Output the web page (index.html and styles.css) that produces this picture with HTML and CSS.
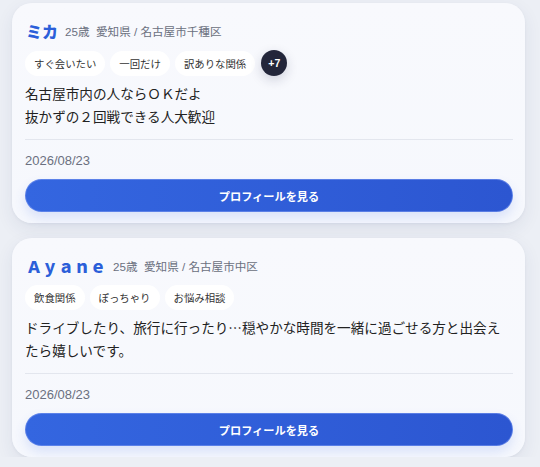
FILE: index.html
```html
<!DOCTYPE html>
<html lang="ja">
<head>
<meta charset="utf-8">
<link rel="stylesheet" href="styles.css">
</head>
<body>
<main class="list">
  <article class="card">
    <div class="head">
      <span class="name">ミカ</span>
      <span class="meta">25歳&nbsp;&nbsp;愛知県 / 名古屋市千種区</span>
    </div>
    <div class="tags">
      <span class="tag">すぐ会いたい</span>
      <span class="tag">一回だけ</span>
      <span class="tag">訳ありな関係</span>
      <span class="more">+7</span>
    </div>
    <p class="msg">名古屋市内の人ならＯＫだよ<br>抜かずの２回戦できる人大歓迎</p>
    <div class="date">2026/08/23</div>
    <button class="btn">プロフィールを見る</button>
  </article>
  <article class="card">
    <div class="head">
      <span class="name">Ａｙａｎｅ</span>
      <span class="meta">25歳&nbsp;&nbsp;愛知県 / 名古屋市中区</span>
    </div>
    <div class="tags">
      <span class="tag">飲食関係</span>
      <span class="tag">ぽっちゃり</span>
      <span class="tag">お悩み相談</span>
    </div>
    <p class="msg">ドライブしたり、旅行に行ったり…穏やかな時間を一緒に過ごせる方と出会えたら嬉しいです。</p>
    <div class="date">2026/08/23</div>
    <button class="btn">プロフィールを見る</button>
  </article>
</main>
</body>
</html>
```
FILE: styles.css
```css
* { box-sizing: border-box; }
html, body {
  margin: 0;
  padding: 0;
  background: #eceff5;
  font-family: "Liberation Sans", "Noto Sans CJK JP", sans-serif;
  color: #222;
}
.list {
  display: flex;
  flex-direction: column;
  gap: 15px;
  padding: 3px 15px 0 12px;
}
.card {
  background: linear-gradient(180deg, #f8f9fd 0%, #f6f8fd 100%);
  border-radius: 20px;
  padding: 16px 12px 11px 13px;
  box-shadow: 0 6px 18px rgba(40, 55, 100, 0.08), 0 1px 3px rgba(40, 55, 100, 0.05);
  display: flex;
  flex-direction: column;
}
.head {
  display: flex;
  align-items: center;
  gap: 7px;
  height: 24px;
  padding-left: 1px;
}
.name {
  font-family: "Noto Sans CJK JP", sans-serif;
  font-weight: 900;
  font-size: 16px;
  color: #2b5fd9;
}
.meta {
  font-size: 11.6px;
  color: #6b7080;
}
.tags {
  display: flex;
  align-items: center;
  gap: 5px;
  margin-top: 7px;
}
.tag {
  height: 25px;
  display: inline-flex;
  align-items: center;
  padding: 0 9px;
  border-radius: 13px;
  background: #ffffff;
  font-family: "Noto Sans CJK JP", sans-serif;
  font-size: 10.4px;
  color: #333;
}
.more {
  width: 26px;
  height: 26px;
  border-radius: 50%;
  background: #23263a;
  color: #fff;
  font-size: 10.5px;
  font-weight: 700;
  display: inline-flex;
  align-items: center;
  justify-content: center;
  margin-left: 1px;
  box-shadow: 0 4px 12px rgba(30, 35, 70, 0.18);
}
.msg {
  margin: 6px 0 0;
  font-family: "Noto Sans CJK JP", sans-serif;
  font-size: 13.6px;
  line-height: 23px;
  color: #222;
  padding-bottom: 11px;
  border-bottom: 1px solid #e3e6ee;
}
.date {
  margin-top: 11px;
  font-size: 13px;
  line-height: 20px;
  color: #6b7080;
}
.btn {
  margin-top: 8px;
  height: 33px;
  border: 1px solid rgba(120, 150, 240, 0.6);
  border-radius: 17px;
  background: linear-gradient(90deg, #3466e0 0%, #2c56d1 100%);
  color: #fff;
  font-family: "Noto Sans CJK JP", sans-serif;
  font-weight: 700;
  font-size: 11.2px;
  box-shadow: 0 6px 12px rgba(70, 110, 230, 0.16);
  cursor: pointer;
}
```
